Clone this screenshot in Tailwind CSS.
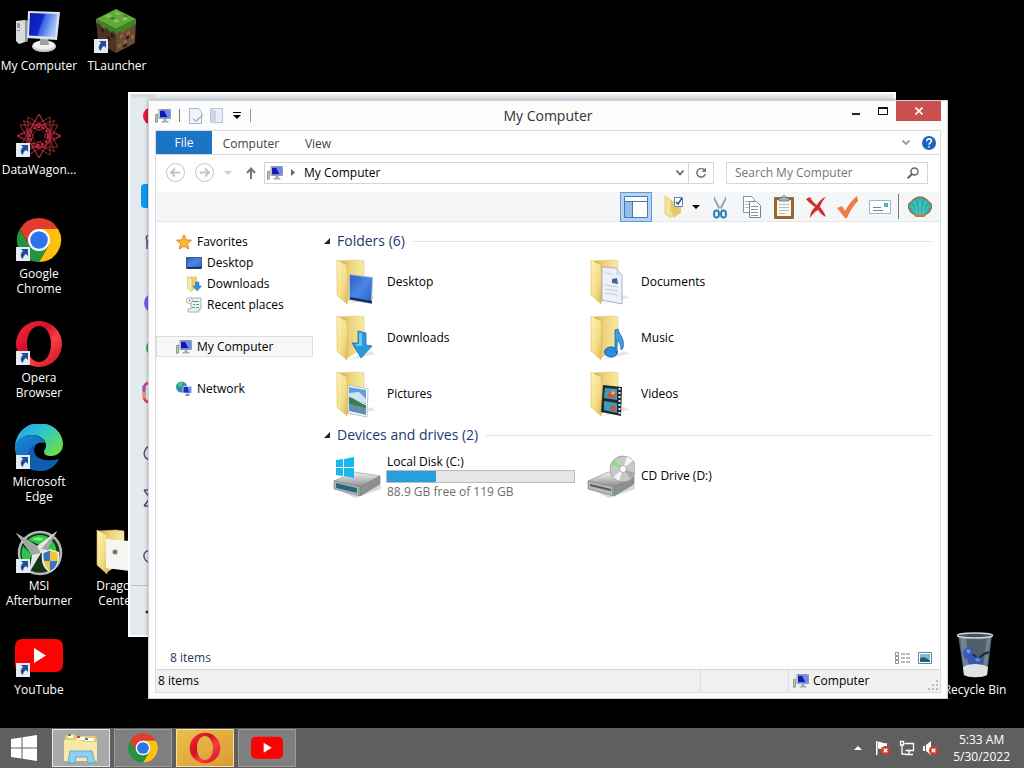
<!DOCTYPE html>
<html lang="en">
<head>
<meta charset="utf-8">
<meta name="viewport" content="width=device-width, initial-scale=1">
<title>My Computer</title>
<script src="https://cdn.jsdelivr.net/npm/@tailwindcss/browser@4"></script>
</head>
<body class="bg-black font-['Open_Sans','Noto_Sans',sans-serif] text-xs text-black">

<!-- shared icons -->
<svg class="absolute size-0" aria-hidden="true">
  <defs>
    <linearGradient id="screen" x1="0" y1="0" x2="1" y2=".3"><stop offset="0" stop-color="#0a1cae"/><stop offset=".5" stop-color="#1226d0"/><stop offset=".55" stop-color="#3a62e4"/><stop offset="1" stop-color="#a9c6fa"/></linearGradient>
    <linearGradient id="flap" x1="0" y1="0" x2="1" y2="1"><stop offset="0" stop-color="#fdf3b8"/><stop offset=".6" stop-color="#f3dc84"/><stop offset="1" stop-color="#d9b455"/></linearGradient>
    <linearGradient id="back" x1="0" y1="0" x2="1" y2="0"><stop offset="0" stop-color="#c9a548"/><stop offset=".4" stop-color="#ead07a"/><stop offset="1" stop-color="#f8eaa4"/></linearGradient>
    <linearGradient id="blue" x1="0" y1="0" x2="1" y2="1"><stop offset="0" stop-color="#2c5fc0"/><stop offset=".5" stop-color="#4a86e6"/><stop offset="1" stop-color="#2760c4"/></linearGradient>
    <linearGradient id="opera-red" x1="0" y1="0" x2="1" y2="1"><stop offset="0" stop-color="#ff2b3c"/><stop offset=".4" stop-color="#cf1126"/><stop offset=".6" stop-color="#fb3c45"/><stop offset="1" stop-color="#c20f20"/></linearGradient>
    <linearGradient id="edge-top" x1="0" y1="0" x2="1" y2=".7"><stop offset="0" stop-color="#1f9fe0"/><stop offset=".5" stop-color="#2fc3d2"/><stop offset="1" stop-color="#66e04a"/></linearGradient>
    <linearGradient id="edge-low" x1="0" y1="0" x2="1" y2="1"><stop offset="0" stop-color="#1a8ad8"/><stop offset="1" stop-color="#0c4c9c"/></linearGradient>
    <linearGradient id="metal" x1="0" y1="0" x2="0" y2="1"><stop offset="0" stop-color="#f4f4f4"/><stop offset="1" stop-color="#8b8b8b"/></linearGradient>
    <symbol id="shortcut" viewBox="0 0 14 14"><path fill="#e6ebf2" d="M0 0h14v14H0z"/><path fill="#1d4f9c" d="M5 2h7v7l-2-2c-2 1-3 3-3 5-3-2-3-5 0-8z"/></symbol>
    <symbol id="pc" viewBox="0 0 16 16"><path fill="#b9c3c0" stroke="#75847c" stroke-width=".7" d="M.5 6.500l2-.5v8l-2 .5z"/><path fill="#dfe5ee" stroke="#6a7796" stroke-width=".7" d="M4 1.500h11.500v9H4z"/><path fill="#1218b4" d="M5 2.500h9.500v7H5z"/><path fill="#6c8cf0" d="M9 2.500h5.500v7h-2z"/><path fill="#9fa9bb" d="M8.500 10.500h3V13h2v1.500h-7V13h2z"/></symbol>
    <symbol id="folder" viewBox="0 0 48 48"><path fill="#000" opacity=".1" d="M14 46l24-9 4 3-22 5z"/><path fill="url(#back)" stroke="#e2c876" stroke-width=".6" d="M6 3l17-1 8 1v30l-17 11z"/><path fill="url(#flap)" stroke="#d8b962" stroke-width=".6" d="M4 2l10 5 1 13-1 26L4 37z"/></symbol>
    <symbol id="chrome" viewBox="0 0 48 48"><path fill="#e33b2e" d="M4.900 13A22 22 0 0 1 43.100 13H24v11z"/><path fill="#fdc10c" d="M43.100 13A22 22 0 0 1 24 46l9.500-16.500L24 13z"/><path fill="#24933f" d="M24 46A22 22 0 0 1 4.900 13l9.600 16.500L33.500 29.500z"/><path fill="#e33b2e" d="M4.900 13h19v11l-9.400 5.500z"/><circle cx="24" cy="24" r="11" fill="#fff"/><circle cx="24" cy="24" r="8.800" fill="#2b74ea"/></symbol>
    <symbol id="opera" viewBox="0 0 48 48"><path fill="url(#opera-red)" fill-rule="evenodd" d="M24 1a23 23 0 1 0 0 46 23 23 0 1 0 0-46zm0 5c7 0 12 8 12 18s-5 18-12 18-12-8-12-18S17 6 24 6z"/></symbol>
    <symbol id="youtube" viewBox="0 0 48 48"><rect y="7" width="48" height="33" rx="7" fill="#fb0303"/><path fill="#fff" d="M19 16l12 7.500L19 31z"/></symbol>
    <symbol id="drive" viewBox="0 0 48 48"><path fill="#000" opacity=".15" d="M2 36l20 10 26-9v-4z"/><path fill="url(#metal)" stroke="#8d8d8d" stroke-width=".6" d="M1 29l20-9 26 4-20 11z"/><path fill="#b4b8ba" stroke="#777" stroke-width=".6" d="M1 29l26 6v9L1 37z"/><path fill="#8d9092" stroke="#777" stroke-width=".6" d="M27 35l20-11v8L27 44z"/></symbol>
    <symbol id="x-badge" viewBox="0 0 10 10"><circle cx="5" cy="5" r="5" fill="#d8382c"/><path stroke="#fff" stroke-width="1.600" d="M3 3l4 4M7 3L3 7"/></symbol>
  </defs>
</svg>

<main class="relative flex h-screen flex-col overflow-hidden">

  <!-- desktop icons -->
  <section class="flex flex-1 items-end justify-between leading-[15px] text-white" aria-label="Desktop">
    <div class="grid h-full grid-flow-col auto-cols-[78px] grid-rows-7 text-center">
      <a href="#" class="flex flex-col items-center gap-[2px] pt-2">
        <svg class="size-12" viewBox="0 0 48 48"><path fill="#d9dbdd" d="M1 13l9-1 3 1v20L4 36l-3-3z"/><path fill="#8f9499" d="M2 15l3 .5V20l-3-.5zM2 22h3v1H2zM10 12l3 1v20l-3 1z"/><ellipse cx="29" cy="38.500" rx="12" ry="5.500" fill="#c9ccd0"/><ellipse cx="29" cy="37" rx="11" ry="4.500" fill="#f0f1f3"/><path fill="#9da1a6" d="M25 30h8l1 7h-9z"/><path fill="#dfe3ea" d="M13 3l32 1-3 28-30-2z"/><path fill="url(#screen)" d="M15 5l27.500 1L40 29l-26-1.500z"/></svg>
        My Computer
      </a>
      <a href="#" class="flex flex-col items-center gap-[2px] pt-2">
        <span class="relative"><svg class="size-12" viewBox="0 0 48 48"><path fill="#4d3423" d="M3 11l20 10v24L5 35z"/><path fill="#6b4a31" d="M23 21l20-10-1 24-19 10z"/><path fill="#63a83a" d="M3 11L23 1l20 10-20 10z"/><path fill="#3e8424" d="M3 11l20 10v5l-3-3-3 1-3-4-4 1-3-5-4-1zM23 21l20-10v5l-3 1-3 4-3-1-3 4-4-1-4 4z"/><path fill="#8ac55c" d="M12 8l4-2 3 2-4 2zM24 4l4 2-3 1-4-2zM29 10l4-1 2 2-4 2zM20 13l4-2 3 2-4 2z"/><path fill="#2f7d1c" d="M17 10l3-1 2 1-3 2zM32 7l3 1-3 1-2-1z"/><path fill="#8a6648" d="M27 27l3-2v4l-3 2zM34 24l3-2v4l-3 2zM30 33l4-2v4l-4 2zM38 28l3-2v4l-3 2zM25 37l3-2v4l-3 1z"/><path fill="#2f1e14" d="M8 19l3 2v4l-3-2zM14 28l3 1v5l-3-2zM18 25l3 1v4l-3-1zM33 29l3-2v3l-3 2zM30 37l4-2v3l-4 2z"/></svg><svg class="absolute bottom-[3px] left-[1px] size-[14px]"><use href="#shortcut"/></svg></span>
        TLauncher
      </a>
      <a href="#" class="col-start-1 row-start-2 flex flex-col items-center gap-[2px] pt-2">
        <span class="relative"><svg class="size-12" viewBox="-24 -24 48 48" fill="none" stroke="#c2303f" stroke-width=".8"><path d="M0-22L19 11H-19zM0 22L19-11H-19zM22 0L-11 19V-19zM-22 0L11 19V-19z"/><path d="M0-22L10-4 22 0 10 4 0 22-10 4-22 0-10-4z M15.500-15.500L10 0 15.500 15.500 0 10-15.500 15.500-10 0-15.500-15.500 0-10z"/><circle r="9" stroke-width="2" stroke-dasharray="3 1.500"/><circle r="6" stroke-dasharray="2 1"/><circle cy="-9" r="3"/><circle cy="9" r="3"/><circle cx="9" r="3"/><circle cx="-9" r="3"/></svg><svg class="absolute bottom-[3px] left-[1px] size-[14px]"><use href="#shortcut"/></svg></span>
        DataWagon...
      </a>
      <a href="#" class="col-start-1 row-start-3 flex flex-col items-center gap-[2px] pt-2">
        <span class="relative"><svg class="size-12"><use href="#chrome"/></svg><svg class="absolute bottom-[3px] left-[1px] size-[14px]"><use href="#shortcut"/></svg></span>
        <span>Google<br>Chrome</span>
      </a>
      <a href="#" class="col-start-1 row-start-4 flex flex-col items-center gap-[2px] pt-2">
        <span class="relative"><svg class="size-12"><use href="#opera"/></svg><svg class="absolute bottom-[3px] left-[1px] size-[14px]"><use href="#shortcut"/></svg></span>
        <span>Opera<br>Browser</span>
      </a>
      <a href="#" class="col-start-1 row-start-5 flex flex-col items-center gap-[2px] pt-2">
        <span class="relative"><svg class="size-12" viewBox="0 0 48 48"><path fill="url(#edge-top)" d="M0 22C1 8 12-1 24-1c14 0 24 10 24 21 0 8-6 12-12 12-5 0-7-2-7-4s2-3 2-7c0-5-6-10-14-10S3 15 0 22z"/><path fill="url(#edge-low)" d="M0 22C2 14 10 11 17 11c7 0 12 4 13 8-6-2-11 1-11 7 0 8 10 13 25 9C40 43 33 47 25 47 11 47-1 36 0 22z"/><path fill="#0f5cb0" d="M30 19c-6-2-11 1-11 7 0 8 10 13 25 9C40 43 33 47 25 47c-9-3-13-9-12-17 1-7 8-13 17-11z"/></svg><svg class="absolute bottom-[3px] left-[1px] size-[14px]"><use href="#shortcut"/></svg></span>
        <span>Microsoft<br>Edge</span>
      </a>
      <a href="#" class="col-start-1 row-start-6 flex flex-col items-center gap-[2px] pt-2">
        <span class="relative"><svg class="size-12" viewBox="0 0 48 48"><circle cx="25" cy="25" r="21" fill="#14351b" stroke="#b7bab8" stroke-width="2.500"/><path fill="#28c845" d="M13 12a17 17 0 0 1 20-3l-6 9zM36 12c5 4 6 10 5 14l-10-6zM8 18c-3 7-1 15 3 19l6-10z"/><path fill="#7df08b" d="M17 11c4-2 9-2 12 0l-5 2z"/><path fill="#e6e8e7" d="M1 5l21 13L42 3 32 22l8 7-14-4-12 20 3-18z"/><path fill="#a3a8a6" d="M1 5l21 13 4 7-9 2zM32 22l10-19-16 18z"/><path fill="#f0f0ea" d="M27 24l8-3 9 3c1 10-2 17-9 20-7-3-9-10-8-20z"/><path fill="#3872c4" d="M28.500 25l6.500-2.500V33h-6c-.5-2-.7-5-.5-8zM35 33h7.500c-1 5-3 8-7.500 10z"/><path fill="#f2c437" d="M35 22.500l7.500 2.500c.3 3 .2 6 0 8H35zM29 33h6v10c-3-2-5-5-6-10z"/></svg><svg class="absolute bottom-[3px] left-[1px] size-[14px]"><use href="#shortcut"/></svg></span>
        <span>MSI<br>Afterburner</span>
      </a>
      <a href="#" class="col-start-2 row-start-6 flex flex-col items-center gap-[2px] pt-2">
        <svg class="size-12" viewBox="0 0 48 48"><use href="#folder" width="48" height="48"/><path fill="#f6f5f1" d="M13 11l24 2v30l-24-3z"/><circle cx="22" cy="24" r="2.500" fill="#777"/></svg>
        <span>Dragon<br>Center</span>
      </a>
      <a href="#" class="col-start-1 row-start-7 flex flex-col items-center gap-[2px] pt-2">
        <span class="relative"><svg class="size-12"><use href="#youtube"/></svg><svg class="absolute bottom-[3px] left-[1px] size-[14px]"><use href="#shortcut"/></svg></span>
        YouTube
      </a>
    </div>
    <a href="#" class="mr-[10px] flex h-[104px] w-[78px] flex-col items-center gap-[2px] whitespace-nowrap pt-2">
      <svg class="size-12" viewBox="0 0 48 48"><path fill="#5c6e7f" opacity=".85" d="M7 3h34l-5 40c-5 3-18 3-23 0z"/><path fill="#8799a8" opacity=".6" d="M9 5h6l4 38-6-1zM36 5h4l-5 37-4 1z"/><path stroke="#172333" stroke-width="2" d="M15 18l16 11M27 27l6-5 5-2" fill="none"/><path fill="#3858b8" d="M13 18c3-4 8-3 9 2 1 2-1 4-2 5 6-1 12 0 11 4 0 4-6 5-9 3-3 1-6-1-5-4-4-1-6-6-4-10z"/><path fill="#6d90dc" d="M15 18c2-2 5-1 5 2l-3 2zM24 27c3-1 5 0 5 2h-4z"/><path fill="#dfe2e3" d="M12 35c6-4 18-4 25 0l-1 8c-5 3-18 3-23 0z"/><ellipse cx="24" cy="3.500" rx="17.500" ry="2.500" fill="#43525f" stroke="#cfd6db" stroke-width="1.500"/></svg>
      Recycle Bin
    </a>
  </section>

  <!-- browser window behind -->
  <section class="absolute bottom-[131px] left-[128px] right-[128px] top-[92px] border-2 border-white bg-[#e4ebf0] pl-[1px]" aria-label="Browser sidebar">
    <svg class="h-full w-6" viewBox="0 0 24 541" preserveAspectRatio="xMinYMin" fill="none"><path fill="#d9dcdd" d="M0 0h24v4H0z"/><circle cx="21" cy="22" r="9" fill="#e5193c"/><rect x="10" y="90" width="24" height="24" rx="4" fill="#0b9bf0"/><path stroke="#fff" stroke-width="2" d="M20 98v10"/><path stroke="#4b5563" stroke-width="1.500" d="M19 149c-5-4-5-7 0-8M16 147v8M20 352c-8 0-10 14 0 14M13 396h9M13 412h9M13 396l6 8-6 8M20 457c-9-2-10 10 0 12"/><circle cx="23" cy="209" r="10" fill="#7a5af8"/><circle cx="23" cy="254" r="8" fill="#35b24a"/><rect x="13" y="289" width="19" height="19" rx="5" stroke="#d6457f" stroke-width="3"/><path stroke="#f59b3c" stroke-width="3" d="M13 298v6"/><path stroke="#7a5af8" stroke-width="3" d="M13 292v5"/><path stroke="#b9c2c9" d="M0 491.500h24"/><circle cx="16" cy="518" r="1.500" fill="#333"/></svg>
  </section>

  <!-- explorer window -->
  <section class="absolute bottom-[69px] left-[148px] right-[76px] top-[100px] flex flex-col border border-[#d0d3d5] bg-[#fcfcfd] px-1.5 pb-[5px] shadow-[0_0_4px_rgba(0,0,0,0.35)]" aria-label="My Computer window">
    <header class="flex h-[29px] shrink-0">
      <div class="flex flex-1 items-center gap-[6px]">
        <svg class="size-4"><use href="#pc"/></svg>
        <span class="ml-[2px] h-[13px] border-l border-[#777]"></span>
        <button class="pl-[3px]" aria-label="Properties"><svg class="h-4 w-[15px]" viewBox="0 0 15 16"><path fill="#eef2fa" stroke="#a9b4cc" d="M.5.5h9l3 3v12H.500z"/><path fill="none" stroke="#a9b4cc" stroke-width="1.500" d="M4 11l3 2 7-6"/></svg></button>
        <button aria-label="New folder"><svg class="h-4 w-[14px]" viewBox="0 0 14 16"><path fill="#e9edf6" stroke="#bcc5d8" d="M.5.5h12v14H.500z"/><path fill="#cbd3e4" d="M1 1l5 2v13l-5-3z"/></svg></button>
        <button class="px-[3px]" aria-label="Customize toolbar"><svg class="h-[7px] w-2" viewBox="0 0 8 7"><path d="M0 0h8v1H0zM0 3h8L4 7z"/></svg></button>
        <span class="h-[13px] border-l border-[#999]"></span>
      </div>
      <h1 class="self-center text-sm text-[#333]">My Computer</h1>
      <div class="flex flex-1 items-start justify-end">
        <button class="grid h-5 w-[27px] place-items-center" aria-label="Minimize"><svg class="h-[10px] w-2" viewBox="0 0 8 10"><path fill="#222" d="M0 7h8v2H0z"/></svg></button>
        <button class="grid h-5 w-[27px] place-items-center" aria-label="Maximize"><svg class="h-2 w-[10px]" viewBox="0 0 10 8"><path fill="#111" fill-rule="evenodd" d="M0 0h10v8H0zM1 2h8v5H1z"/></svg></button>
        <button class="grid h-5 w-[45px] place-items-center bg-[#c9504f]" aria-label="Close"><svg class="size-2" viewBox="0 0 8 8"><path stroke="#fff" stroke-width="1.600" d="M.5.5l7 7M7.500.5l-7 7"/></svg></button>
      </div>
    </header>

    <div class="flex min-h-0 flex-1 flex-col border border-[#dadbdc] bg-white">
      <nav class="flex h-6 shrink-0 items-center border-b border-[#dadbdc] text-[#444]" aria-label="Ribbon">
        <button class="h-full w-14 bg-[#1a75c6] text-white">File</button>
        <button class="h-full w-[78px] pt-[2px]">Computer</button>
        <button class="h-full w-14 pt-[2px]">View</button>
        <button class="ml-auto mr-3" aria-label="Expand ribbon"><svg class="h-[5px] w-2" viewBox="0 0 8 5"><path fill="none" stroke="#999" stroke-width="1.800" d="M.5.5L4 4 7.500.5"/></svg></button>
        <button class="mr-1" aria-label="Help"><svg class="size-[14px]" viewBox="0 0 14 14"><circle cx="7" cy="7" r="7" fill="#1c63bb"/><path fill="none" stroke="#fff" stroke-width="1.600" d="M4.700 5.200C4.700 2 9.400 2.300 9.400 5c0 1.500-2.300 1.700-2.300 3.700M7.100 10v1.600"/></svg></button>
      </nav>

      <div class="flex h-[37px] shrink-0 items-center pb-[2px] pl-[10px] pr-3">
        <button aria-label="Back"><svg class="size-[19px]" viewBox="0 0 19 19" fill="none" stroke="#c4c4c4"><circle cx="9.500" cy="9.500" r="9"/><path stroke-width="1.800" d="M14 9.500H5M9 5.500l-4 4 4 4"/></svg></button>
        <button class="ml-[10px]" aria-label="Forward"><svg class="size-[19px]" viewBox="0 0 19 19" fill="none" stroke="#c4c4c4"><circle cx="9.500" cy="9.500" r="9"/><path stroke-width="1.800" d="M5 9.500h9M10 5.500l4 4-4 4"/></svg></button>
        <button class="ml-[10px]" aria-label="Recent locations"><svg class="h-1 w-2" viewBox="0 0 8 4"><path fill="#ccc" d="M0 0h8L4 4z"/></svg></button>
        <button class="ml-[14px]" aria-label="Up"><svg class="h-3 w-[10px]" viewBox="0 0 10 12"><path fill="none" stroke="#777" stroke-width="2" d="M5 12V1.500M1 6l4-4.500L9 6"/></svg></button>
        <div class="ml-2 flex h-[22px] flex-1 items-center border border-[#d5d6d7] pl-[2px]">
          <svg class="size-4"><use href="#pc"/></svg>
          <svg class="ml-2 h-[7px] w-1" viewBox="0 0 4 7"><path fill="#666" d="M0 0l4 3.500L0 7z"/></svg>
          <a href="#" class="ml-[9px]">My Computer</a>
          <button class="ml-auto mr-1" aria-label="Previous locations"><svg class="h-[6px] w-2" viewBox="0 0 8 6"><path fill="none" stroke="#666" stroke-width="1.800" d="M.5.5L4 4.500 7.500.5"/></svg></button>
          <button class="grid h-full w-[25px] place-items-center border-l border-[#d5d6d7]" aria-label="Refresh"><svg class="size-3" viewBox="0 0 12 12"><path fill="none" stroke="#777" stroke-width="1.600" d="M9.500 3A4.300 4.300 0 1 0 10.300 7"/><path fill="#777" d="M11 .5V5H6.500z"/></svg></button>
        </div>
        <label class="ml-3 flex h-[22px] w-[202px] items-center border border-[#d5d6d7] pl-2 pr-2">
          <input type="search" aria-label="Search My Computer" placeholder="Search My Computer" class="min-w-0 flex-1 outline-none placeholder:text-[#757575]">
          <svg class="h-3 w-3" viewBox="0 0 12 12"><circle cx="7.500" cy="4.500" r="3.500" fill="none" stroke="#666" stroke-width="1.500"/><path stroke="#666" stroke-width="2" d="M5 7L.7 11.300"/></svg>
        </label>
      </div>

      <div class="flex h-[30px] shrink-0 items-center border-b border-[#e6e7e8] bg-[#f5f6f7] pr-2" role="toolbar">
        <button class="ml-auto grid h-[30px] w-8 place-items-center border border-[#5f9bd3] bg-[#b5d3f0]" aria-label="Navigation pane"><svg class="h-[22px] w-6" viewBox="0 0 24 22"><path fill="#fff" stroke="#4a78a8" d="M.5.5h23v21H.500z"/><path fill="#8fbdee" d="M1 6h7v15H1z"/><path stroke="#4a78a8" d="M1 5.500h22M8.500 6v15"/></svg></button>
        <button class="ml-[10px]" aria-label="Folder options"><svg class="h-6 w-6" viewBox="0 0 24 24"><path fill="#e6cc67" d="M7 6h12v12l-8 5z"/><path fill="#f4e19a" stroke="#d9b94e" stroke-width=".6" d="M3 1l6 4v18l-6-4z"/><path fill="#fff" stroke="#6885ac" d="M12.500 2.500h8v9h-8z"/><path fill="none" stroke="#2353a4" stroke-width="1.500" d="M14 7l2 2 4-6"/></svg></button>
        <button class="ml-[6px]" aria-label="More folder options"><svg class="h-1 w-2" viewBox="0 0 8 4"><path d="M0 0h8L4 4z"/></svg></button>
        <button class="ml-2" aria-label="Cut"><svg class="size-6" viewBox="0 0 24 24" fill="none"><path fill="#8aa6bd" d="M6 1l8 15-2 1L6 5zM18 1l-8 15 2 1 6-12z"/><ellipse cx="8.500" cy="19" rx="2.500" ry="3.500" stroke="#2585b8" stroke-width="2"/><ellipse cx="15.500" cy="19" rx="2.500" ry="3.500" stroke="#2585b8" stroke-width="2"/></svg></button>
        <button class="ml-2" aria-label="Copy"><svg class="size-6" viewBox="0 0 24 24"><path fill="#fff" stroke="#8597aa" d="M3.500 1.500h8l3 3v13h-11z"/><path stroke="#a8b8c8" d="M5 6.500h6M5 9.500h6M5 12.500h6"/><path fill="#fff" stroke="#71869c" d="M9.500 6.500h7l4 4v12h-11z"/><path stroke="#7f97b0" d="M11 11.500h7M11 14.500h7M11 17.500h7M11 20.500h7"/></svg></button>
        <button class="ml-2" aria-label="Paste"><svg class="size-6" viewBox="0 0 24 24"><rect x="2" y="2" width="20" height="22" rx="1" fill="#9c6530"/><path fill="#f8f8f6" d="M5 5h14v16H5z"/><path fill="#a9b3bb" stroke="#5f6a72" stroke-width=".7" d="M7 3h3c0-3 4-3 4 0h3v3H7z"/><path stroke="#bbb" d="M7 9.500h10M7 12.500h10M7 15.500h10M7 18.500h6"/></svg></button>
        <button class="ml-2" aria-label="Delete"><svg class="size-6" viewBox="0 0 24 24"><path fill="#cf3028" d="M2 4l4-2c2 4 4 6 7 8 2-4 5-7 9-8-3 3-5 6-6 10 2 2 4 5 6 10-4-2-6-4-8-7-4 2-6 5-8 8 0-5 2-8 5-11C7 9 4 7 2 4z"/></svg></button>
        <button class="ml-2" aria-label="Rename"><svg class="size-6" viewBox="0 0 24 24"><path fill="#ee7d45" d="M1 13l5-2 3 5c3-6 7-11 12-15l1 5c-5 5-8 10-11 17H9z"/></svg></button>
        <button class="ml-2" aria-label="Properties"><svg class="h-6 w-6" viewBox="0 0 24 24"><path fill="#fff" stroke="#a2b4c5" d="M1.500 5.500h21v13h-21z"/><path fill="#43b7bd" d="M16 8h4v4h-4z"/><path stroke="#6e87a0" d="M5 12.500h8M5 15.500h10"/></svg></button>
        <span class="ml-[6px] h-[25px] border-l border-[#777]"></span>
        <button class="ml-[9px]" aria-label="Shell"><svg class="size-6" viewBox="0 0 24 24"><path fill="#2bb0b0" stroke="#93794d" stroke-width="1.500" d="M6 19C1 17 0 12 1 9c1-2 3-2 4-4 2-1 3-3 7-3s5 2 7 3c1 2 3 2 4 4 1 3 0 8-5 10l-2 2H8z"/><path stroke="#5fcfcb" d="M12 19V4M10 19L6 6M14 19l4-13M9 19l-6-8M15 19l6-8" fill="none"/><path fill="#a88a55" d="M6 19h12l-2 3H8z"/></svg></button>
      </div>

      <div class="flex min-h-0 flex-1 pt-[9px]">
        <nav class="w-[157px] shrink-0 leading-[21px]" aria-label="Places">
          <a href="#" class="flex items-center gap-[5px] pl-5"><svg class="size-4" viewBox="0 0 16 16"><path fill="#fbb934" stroke="#de7d1d" stroke-width=".9" d="M8 .8l2.100 5 5.400.4-4.100 3.500 1.300 5.300L8 12.200 3.300 15l1.300-5.300L.5 6.200l5.400-.4z"/></svg>Favorites</a>
          <a href="#" class="flex items-center gap-[5px] pl-[30px]"><svg class="size-4" viewBox="0 0 16 16"><path fill="url(#blue)" stroke="#1e3c77" stroke-width=".8" d="M.5 2.500h15v11H.500z"/><path fill="#16294f" d="M1 12h14v1.500H1z"/></svg>Desktop</a>
          <a href="#" class="flex items-center gap-[5px] pl-[30px]"><svg class="size-4" viewBox="0 0 16 16"><path fill="#e9cf74" d="M4 .5h7V12l-6 3z"/><path fill="#f8eaa8" stroke="#d8b85a" stroke-width=".6" d="M1.500.5L6 3v12.500l-4.500-3z"/><path fill="#3292d6" stroke="#1a69a6" stroke-width=".5" d="M9.500 6h3.500v4h2.500l-4.300 5L7 10h2.500z"/></svg>Downloads</a>
          <a href="#" class="flex items-center gap-[5px] pl-[30px]"><svg class="size-4" viewBox="0 0 16 16"><path fill="#eef3f1" stroke="#8f9f9c" stroke-width=".8" d="M5 1h10v11h-2v3H2v-3h3z"/><path stroke="#5d9c8c" d="M7 4.500h6M7 7.500h2M10 7.500h3M6 10.500h3M10 10.500h3"/><circle cx="3.500" cy="3.500" r="3" fill="#fff" stroke="#999" stroke-width=".8"/><path fill="none" stroke="#666" stroke-width=".7" d="M3.500 2v2H5"/></svg>Recent places</a>
          <a href="#" class="mt-[21px] flex h-[21px] items-center gap-[5px] border border-[#dedede] bg-[#f7f7f7] pl-[19px]"><svg class="size-4"><use href="#pc"/></svg>My Computer</a>
          <a href="#" class="mt-[21px] flex items-center gap-[5px] pl-5"><svg class="size-4" viewBox="0 0 16 16"><circle cx="5.500" cy="6" r="5.500" fill="#2f8fa8"/><path fill="#62c878" d="M2 3c2-2 4-2 5-1L5 5 3 6zM6 7l3-3 1 4-3 3z"/><path fill="#1a2fc0" stroke="#cdd7ee" stroke-width=".8" d="M7 5.500h8.500V12H7z"/><path fill="#6d93f2" d="M11.500 6H15v5.500h-2z"/><path fill="#8b94a8" d="M10 12.500h3V14h1v1H9v-1h1z"/></svg>Network</a>
        </nav>

        <div class="flex flex-1 flex-col pl-[11px] pr-2">
          <h2 class="flex h-5 items-center text-sm text-[#24386f]"><svg class="mr-[7px] size-[6px]" viewBox="0 0 7 7"><path fill="#222" d="M7 0v7H0z"/></svg>Folders (6)<span class="ml-2 flex-1 border-t border-[#dfe1e6]"></span></h2>
          <div class="mt-[3px] grid auto-rows-[56px] grid-cols-[254px_254px] items-center pl-[9px]">
            <a href="#" class="flex items-center gap-[6px]"><svg class="size-12" viewBox="0 0 48 48"><use href="#folder" width="48" height="48"/><path fill="url(#blue)" stroke="#b0bccb" d="M16.500 16.500l23 3-1 26-22-4z"/><path fill="#16305e" d="M17 39l22 4v2.500l-22-4z"/></svg>Desktop</a>
            <a href="#" class="flex items-center gap-[6px]"><svg class="size-12" viewBox="0 0 48 48"><use href="#folder" width="48" height="48"/><path fill="#eef1f9" stroke="#98a2b4" stroke-width=".8" d="M15 9l14 1 6 7v29l-20-4z"/><path fill="#d6ddec" d="M29 10v7h6z"/><path fill="#48698f" d="M25 21l5-1 1 6-6-1z"/><path stroke="#c4ccda" d="M18 15l8 1M18 27l13 2M18 31l13 2M18 35l13 2"/></svg>Documents</a>
            <a href="#" class="flex items-center gap-[6px]"><svg class="size-12" viewBox="0 0 48 48"><use href="#folder" width="48" height="48"/><path fill="#2c9bdc" stroke="#1873ae" stroke-width=".8" d="M25 17l8 2v12l6 1-11 12-9-15h6z"/><path fill="#6cc6f2" d="M26 18.500l3 .7V32h-5l-2-2h4z"/></svg>Downloads</a>
            <a href="#" class="flex items-center gap-[6px]"><svg class="size-12" viewBox="0 0 48 48"><use href="#folder" width="48" height="48"/><ellipse cx="24" cy="38" rx="6.500" ry="5" fill="#2b8ddd" stroke="#1762a5"/><path fill="#3f9fe6" stroke="#1762a5" stroke-width=".8" d="M28 38V16l3-1c1 6 7 9 5 19l-2 2c0-5-1-8-4-10v12z"/></svg>Music</a>
            <a href="#" class="flex items-center gap-[6px]"><svg class="size-12" viewBox="0 0 48 48"><use href="#folder" width="48" height="48"/><path fill="#fff" stroke="#a8b5be" stroke-width=".8" d="M15 15l20 4-1 28-19-4z"/><path fill="#5f9fdd" d="M16 17l17 3v14l-17-6z"/><path fill="#cfe5f4" d="M16 23l10-1 7 7v4l-9-2-8-4z"/><path fill="#3d7d4d" d="M16 27c7 2 10 6 17 8v5l-17-5z"/><path fill="#5f91b4" d="M16 34l17 4v7l-17-4z"/></svg>Pictures</a>
            <a href="#" class="flex items-center gap-[6px]"><svg class="size-12" viewBox="0 0 48 48"><use href="#folder" width="48" height="48"/><path fill="#25292b" d="M16 15l19 2-1 29-20-4z"/><path fill="#3c9dbe" d="M18 18l12 1v11l-13-2zM17 31l13 2v10l-13-3z"/><path fill="#d5532d" d="M20 25l4-3 5 1-1 5-8-1zM22 38l5-3 2 4-2 3z"/><path fill="#f1b03c" d="M25 21l3 1-1 3-3-1z"/><path stroke="#eee" stroke-width="2" stroke-dasharray="2 2" d="M32.500 18v27"/></svg>Videos</a>
          </div>
          <h2 class="mt-[3px] flex h-5 items-center text-sm text-[#24386f]"><svg class="mr-[7px] size-[6px]" viewBox="0 0 7 7"><path fill="#222" d="M7 0v7H0z"/></svg>Devices and drives (2)<span class="ml-2 flex-1 border-t border-[#dfe1e6]"></span></h2>
          <div class="mt-[3px] grid auto-rows-[56px] grid-cols-[254px_254px] items-center pl-[9px]">
            <a href="#" class="flex items-center gap-[5px]"><svg class="size-12" viewBox="0 0 48 48"><use href="#drive" width="48" height="48"/><path fill="#2a6680" d="M3 31l21 5v5L3 36z"/><path fill="#46d36a" d="M25 36h1.500v6H25z"/><path fill="#16b9ee" d="M3 8l7-1v8H3zM11 7l10-2v10H11zM3 16h7v8l-7-1zM11 16h10v10l-10-2z"/></svg>
              <span class="block w-[189px]">
                <span class="block pl-[1px] leading-[17px]">Local Disk (C:)</span>
                <span class="block h-[13px] border border-[#bcbcbc] bg-[#e6e6e6]" role="meter" aria-label="Used space" aria-valuenow="26" aria-valuemin="0" aria-valuemax="100"><span class="block h-full bg-[#26a0da]" style="width:26%"></span></span>
                <span class="block pl-[1px] leading-[17px] text-[#6d6d6d]">88.9 GB free of 119 GB</span>
              </span></a>
            <a href="#" class="flex items-center gap-[6px]"><svg class="size-12" viewBox="0 0 48 48"><use href="#drive" width="48" height="48"/><path fill="#555" d="M3 32l21 5v2L3 34z"/><path fill="#46c36a" d="M25 36h1.500v6H25z"/><circle cx="36" cy="17" r="13" fill="#c6c8ca" stroke="#98999b" stroke-width=".8"/><path fill="#f4f5f6" d="M36 17l4-12.500 6 4zM36 17l-4 12-6-4z"/><path fill="#8fdc7d" d="M36 17L24 12l3-4z"/><path fill="#a5a8ac" d="M36 17l12 4-4 6z"/><circle cx="36" cy="17" r="3.500" fill="#fff" stroke="#999" stroke-width=".8"/></svg>CD Drive (D:)</a>
          </div>
        </div>
      </div>

      <div class="flex h-[23px] shrink-0 items-center pl-[14px] pr-2 text-[#26395f]">
        8 items
        <button class="ml-auto" aria-label="Details view"><svg class="h-3 w-4" viewBox="0 0 16 12"><path fill="#fff" stroke="#777" stroke-width=".8" d="M.5.500h3v3h-3zM.5 4.500h3v3h-3zM.5 8.500h3v3h-3z"/><path stroke="#777" stroke-dasharray="4 1" d="M6 2h10M6 6h10M6 10h10"/></svg></button>
        <button class="ml-[7px]" aria-label="Large icons view"><svg class="h-3 w-[14px]" viewBox="0 0 14 12"><path fill="#fff" stroke="#5d8ba0" d="M.5.500h13v11H.500z"/><path fill="#84b9d8" d="M2 2h10v5H2z"/><path fill="#29616f" d="M2 6l4-1 6 3v2H2z"/></svg></button>
      </div>
      <footer class="flex h-[23px] shrink-0 items-center border-t border-[#d9d9d9] bg-[#f0f0f0] pl-[2px]">
        <span class="flex-1">8 items</span>
        <span class="h-full w-[88px] border-l border-[#dcdcdc]"></span>
        <span class="flex h-full w-[152px] items-center gap-1 border-l border-[#dcdcdc] pl-1"><svg class="size-4"><use href="#pc"/></svg>Computer
          <svg class="ml-auto mr-[2px] mt-2 size-[10px]" viewBox="0 0 10 10"><path fill="#bbb" d="M8 0h2v2H8zM8 4h2v2H8zM8 8h2v2H8zM4 4h2v2H4zM4 8h2v2H4zM0 8h2v2H0z"/></svg></span>
      </footer>
    </div>
  </section>

  <!-- taskbar -->
  <footer class="flex h-10 shrink-0 items-center bg-[#5f5f5f] text-white">
    <button class="grid h-full w-[52px] place-items-center pr-1" aria-label="Start"><svg class="h-[26px] w-[26px]" viewBox="0 0 26 26"><path fill="#fff" d="M0 4l10.500-1.500v10H0zM11.500 2.300L26 0v12.500H11.500zM0 13.500h10.500v10L0 22zM11.500 13.500H26V26l-14.500-2.300z"/></svg></button>
    <div class="flex gap-1">
      <button class="grid h-[38px] w-[58px] place-items-center border border-[#e6e6e6] bg-[#a9a9a9]" aria-label="File Explorer"><svg class="h-8 w-9" viewBox="0 0 36 32"><path fill="#e8cc70" d="M2 5l2-3h7l2 2h19l2 3v22H2z"/><path fill="#fff" d="M5 3h5v3H5zM14 5h8v3h-8zM22 6h9v3h-9z"/><path fill="#3d9b49" d="M5 2h3v2H5z"/><path fill="#d8432f" d="M14 4h3v2h-3z"/><path fill="#3b7fd0" d="M22 6h3v2h-3z"/><path fill="#f8e9a8" d="M1 8h16l3 2h14v19H1z"/><path fill="#8ed0ee" stroke="#4d9fcc" stroke-width=".8" d="M5 31l2-12h22l3 12h-7l-1-6H13l-1 6z"/></svg></button>
      <button class="grid h-[38px] w-[58px] place-items-center border border-[#9b9b9b] bg-[#7f7f7f]" aria-label="Google Chrome"><svg class="size-8"><use href="#chrome"/></svg></button>
      <button class="grid h-[38px] w-[58px] place-items-center border border-[#f5dfa8] bg-linear-to-br from-[#e8c04a] to-[#dd9a35]" aria-label="Opera Browser"><svg class="size-8"><use href="#opera"/></svg></button>
      <button class="grid h-[38px] w-[58px] place-items-center border border-[#9b9b9b] bg-[#7f7f7f]" aria-label="YouTube"><svg class="size-8"><use href="#youtube"/></svg></button>
    </div>
    <button class="ml-auto" aria-label="Show hidden icons"><svg class="h-1 w-2" viewBox="0 0 8 4"><path fill="#fff" d="M0 4h8L4 0z"/></svg></button>
    <button class="ml-[13px]" aria-label="Action Center"><svg class="size-4" viewBox="0 0 16 16"><path fill="#fff" d="M1 1h1.500v14H1zM3 2c3-1 4 2 9 1v6C8 10 6 8 3 9z"/><use href="#x-badge" x="6" y="6" width="9" height="9"/></svg></button>
    <button class="ml-2" aria-label="Network"><svg class="size-4" viewBox="0 0 16 16"><path fill="none" stroke="#fff" stroke-width="1.300" d="M5.500 3.500h9v7h-8M10 11v3M6 14.500h8M1.500 1.500h3v3.500h-3zM3 5v9h3"/></svg></button>
    <button class="ml-2" aria-label="Volume"><svg class="size-4" viewBox="0 0 16 16"><path fill="#fff" d="M0 6h2v5H0zM3 5l5-4v14l-5-4z"/><use href="#x-badge" x="6" y="6" width="9" height="9"/></svg></button>
    <div class="ml-[14px] mr-[14px] text-center leading-[17px]"><time>5:33 AM<br>5/30/2022</time></div>
  </footer>
</main>
</body>
</html>
